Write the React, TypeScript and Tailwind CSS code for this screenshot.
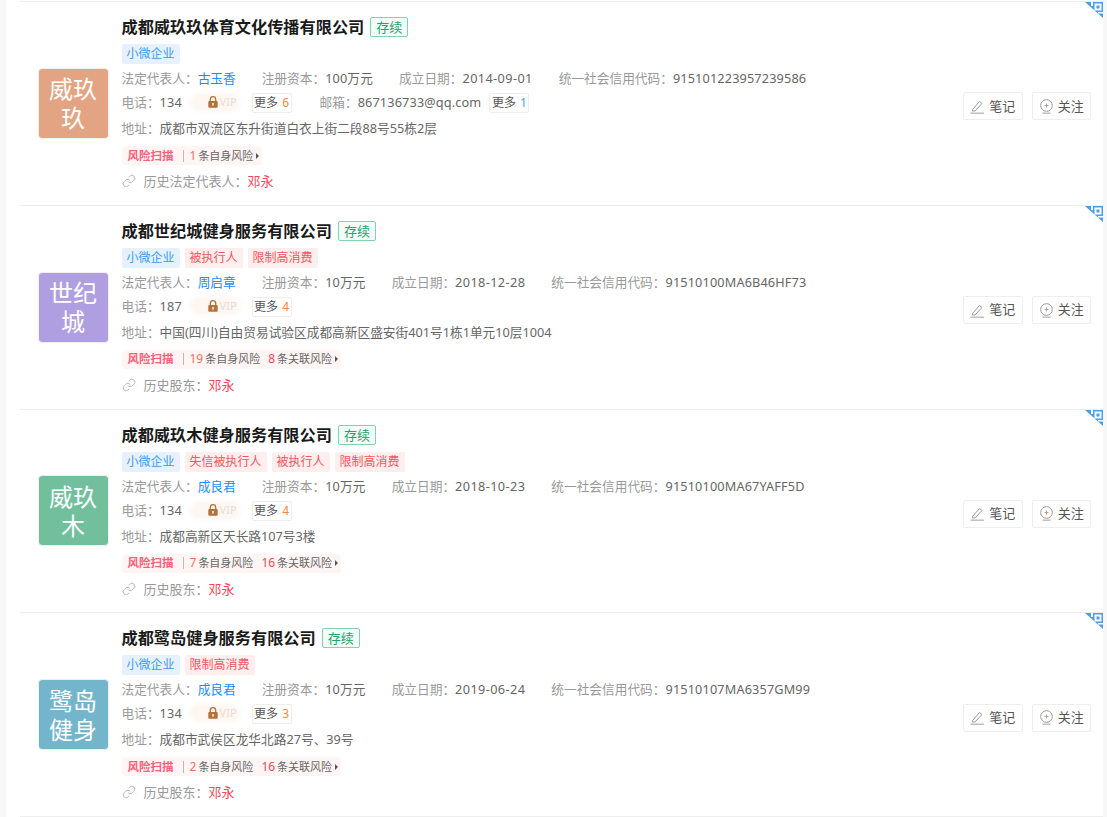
import React from 'react';
import { Link } from 'lucide-react';

type Tag = { label: string; blue?: boolean };

interface Company {
  name: string;
  logo: string;
  logoColor: string;
  tags: Tag[];
  person: string;
  capital: string;
  date: string;
  code: string;
  phone: string;
  more: number;
  email?: string;
  address: string;
  selfRisk: number;
  relatedRisk?: number;
  historyLabel: string;
}

const companies: Company[] = [
  {
    name: '成都威玖玖体育文化传播有限公司',
    logo: '威玖玖',
    logoColor: 'bg-[#e2a483]',
    tags: [{ label: '小微企业', blue: true }],
    person: '古玉香',
    capital: '100万元',
    date: '2014-09-01',
    code: '915101223957239586',
    phone: '134',
    more: 6,
    email: '867136733@qq.com',
    address: '成都市双流区东升街道白衣上街二段88号55栋2层',
    selfRisk: 1,
    historyLabel: '历史法定代表人',
  },
  {
    name: '成都世纪城健身服务有限公司',
    logo: '世纪城',
    logoColor: 'bg-[#b09fe0]',
    tags: [{ label: '小微企业', blue: true }, { label: '被执行人' }, { label: '限制高消费' }],
    person: '周启章',
    capital: '10万元',
    date: '2018-12-28',
    code: '91510100MA6B46HF73',
    phone: '187',
    more: 4,
    address: '中国(四川)自由贸易试验区成都高新区盛安街401号1栋1单元10层1004',
    selfRisk: 19,
    relatedRisk: 8,
    historyLabel: '历史股东',
  },
  {
    name: '成都威玖木健身服务有限公司',
    logo: '威玖木',
    logoColor: 'bg-[#72bf9e]',
    tags: [{ label: '小微企业', blue: true }, { label: '失信被执行人' }, { label: '被执行人' }, { label: '限制高消费' }],
    person: '成良君',
    capital: '10万元',
    date: '2018-10-23',
    code: '91510100MA67YAFF5D',
    phone: '134',
    more: 4,
    address: '成都高新区天长路107号3楼',
    selfRisk: 7,
    relatedRisk: 16,
    historyLabel: '历史股东',
  },
  {
    name: '成都鹭岛健身服务有限公司',
    logo: '鹭岛健身',
    logoColor: 'bg-[#73b6cc]',
    tags: [{ label: '小微企业', blue: true }, { label: '限制高消费' }],
    person: '成良君',
    capital: '10万元',
    date: '2019-06-24',
    code: '91510107MA6357GM99',
    phone: '134',
    more: 3,
    address: '成都市武侯区龙华北路27号、39号',
    selfRisk: 2,
    relatedRisk: 16,
    historyLabel: '历史股东',
  },
];

const CornerMark = () => (
  <svg className="absolute right-0 top-0" width="18" height="16" viewBox="0 0 18 16">
    <polygon points="0,0 18,0 18,16" fill="#4a9eea" />
    <rect x="9.5" y="1.5" width="7" height="7" fill="#fff" />
    <rect x="11.5" y="3.5" width="3" height="3" fill="#4a9eea" />
    <rect x="6" y="0" width="2" height="4" fill="#fff" />
    <rect x="13" y="10" width="5" height="1.5" fill="#fff" />
  </svg>
);

const PencilIcon = () => (
  <svg width="15" height="15" viewBox="0 0 15 15" fill="none" stroke="#999" strokeWidth="1">
    <path d="M2.5 10.5 L9.5 2.5 L12 4.5 L5 12 H2.5 Z" />
    <path d="M0.5 14.2 H14" stroke="#bbb" strokeWidth="1.4" />
  </svg>
);

const FollowIcon = () => (
  <svg width="15" height="15" viewBox="0 0 15 15" fill="none" stroke="#999" strokeWidth="1">
    <circle cx="7.5" cy="6.5" r="5.8" />
    <path d="M7.5 4.5 V8.5 M5.5 6.5 H9.5" stroke="#c8a080" />
    <path d="M3.5 14.2 H11.5" stroke="#bbb" strokeWidth="1.4" />
  </svg>
);

const LockIcon = () => (
  <svg width="10" height="12" viewBox="0 0 10 12">
    <path d="M2.3 5 V3.4 a2.7 2.7 0 0 1 5.4 0 V5" fill="none" stroke="#b5713a" strokeWidth="1.3" />
    <rect x="0.3" y="5" width="9.4" height="6.8" rx="1" fill="#b5713a" />
    <rect x="4.3" y="7" width="1.4" height="2.6" fill="#fff" />
  </svg>
);

const Label = ({ children }: { children: React.ReactNode }) => (
  <span className="text-[#999]">
    {children}
    {'\uFF1A'}
  </span>
);

const Value = ({ children }: { children: React.ReactNode }) => <span className="tracking-[0.15px]">{children}</span>;

const MoreButton = ({ count, color }: { count: number; color: string }) => (
  <span className="mt-[2px] flex h-5 w-10 items-center justify-center gap-1 rounded-[2px] border border-[#eee] text-xs text-[#555]">
    更多 <span className={color}>{count}</span>
  </span>
);

const ActionButton = ({ icon, label }: { icon: React.ReactNode; label: string }) => (
  <span className="flex h-7 w-[59.5px] items-center justify-center gap-1 rounded-[2px] border border-[#eee] text-[13px] text-[#555]">
    {icon}
    {label}
  </span>
);

const CompanyRow = ({ company }: { company: Company }) => (
  <div className="relative flex h-[203.75px] items-center border-t border-[#eee] pl-[17.5px] pr-3">
    <CornerMark />
    <div
      className={`flex h-[71px] w-[71px] shrink-0 items-center justify-center rounded border border-[#f0f0f0] px-[10px] text-center text-2xl leading-[29px] text-white ${company.logoColor}`}
    >
      {company.logo}
    </div>
    <div className="ml-[13px] flex h-full min-w-0 flex-1 flex-col pt-[14px] text-[12.7px] leading-5 text-[#666]">
      <div className="flex h-[22px] items-center gap-[6px]">
        <span className="text-[16.2px] font-bold text-[#1a1a1a]">{company.name}</span>
        <span className="flex h-5 items-center rounded-[2px] border border-[#7fd4b0] bg-[#f5fbf8] px-[5px] text-[13px] text-[#15a86e]">存续</span>
      </div>
      <div className="mt-[6px] flex h-5 gap-[5px]">
        {company.tags.map(tag => (
          <span
            key={tag.label}
            className={`flex items-center rounded-[2px] px-[5px] text-xs ${
              tag.blue ? 'bg-[#e5f2fd] text-[#3c9bf0]' : 'bg-[#ffeeee] text-[#f5555f]'
            }`}
          >
            {tag.label}
          </span>
        ))}
      </div>
      <div className="mt-1 flex h-5 gap-[26px] whitespace-nowrap">
        <span>
          <Label>法定代表人</Label>
          <span className="text-[#1a8cff]">{company.person}</span>
        </span>
        <span>
          <Label>注册资本</Label>
          <Value>{company.capital}</Value>
        </span>
        <span>
          <Label>成立日期</Label>
          <span className="tracking-[0.4px]">{company.date}</span>
        </span>
        <span>
          <Label>统一社会信用代码</Label>
          <Value>{company.code}</Value>
        </span>
      </div>
      <div className="mt-1 flex h-5 items-center whitespace-nowrap">
        <Label>电话</Label>
        <span className="w-[30px] tracking-[0.15px]">{company.phone}</span>
        <span className="relative flex h-[18px] w-[50px] items-center justify-end rounded-full pr-[3px]">
          <span className="absolute inset-0 rounded-full bg-[#fdf6f1] blur-[2px]" />
          <span className="relative mr-[2px]">
            <LockIcon />
          </span>
          <span className="relative text-[11px] text-[#e8ddd5]">VIP</span>
        </span>
        <span className="ml-3">
          <MoreButton count={company.more} color="text-[#f5893c]" />
        </span>
        {company.email && (
          <>
            <span className="ml-7">
              <Label>邮箱</Label>
              <Value>{company.email}</Value>
            </span>
            <span className="ml-2">
              <MoreButton count={1} color="text-[#4a9eea]" />
            </span>
          </>
        )}
      </div>
      <div className="mt-[6px] h-5 whitespace-nowrap">
        <Label>地址</Label>
        {company.address}
      </div>
      <div className="mt-2 flex h-[19px] w-fit items-center rounded bg-[#fff5f5] pl-[6px] pr-[3px] text-[11px] text-[#666]">
        <span className="text-[11.5px] font-bold text-[#f8607a]">风险扫描</span>
        <span className="ml-[9px] mr-[6px] h-3 w-px bg-[#bbb]" />
        <span className="text-xs text-[#f5705a]">{company.selfRisk}</span>
        <span className="ml-[2px]">条自身风险</span>
        {company.relatedRisk && (
          <>
            <span className="ml-2 text-xs text-[#f5455a]">{company.relatedRisk}</span>
            <span className="ml-[2px]">条关联风险</span>
          </>
        )}
        <span className="ml-[3px] h-0 w-0 border-y-[3px] border-l-[3px] border-y-transparent border-l-[#555]" />
      </div>
      <div className="mt-[6px] flex h-5 items-center whitespace-nowrap text-[13px]">
        <Link size={14} strokeWidth={1.4} className="text-[#aaa]" />
        <span className="ml-[8px]">
          <Label>{company.historyLabel}</Label>
        </span>
        <span className="text-[#f5455a]">邓永</span>
      </div>
    </div>
    <div className="mt-[6px] flex shrink-0 gap-[9px]">
      <ActionButton icon={<PencilIcon />} label="笔记" />
      <ActionButton icon={<FollowIcon />} label="关注" />
    </div>
  </div>
);

export default function App() {
  return (
    <div
      className="flex h-[817px] w-full overflow-hidden bg-[#f7f7f7]"
      style={{ fontFamily: '"Noto Sans", "Noto Sans CJK SC", sans-serif' }}
    >
      <div className="ml-[6px] mr-1 min-w-0 flex-1 bg-white pl-3.5 pt-px">
        {companies.map(company => (
          <CompanyRow key={company.name} company={company} />
        ))}
        <div className="border-t border-[#eee]" />
      </div>
    </div>
  );
}
